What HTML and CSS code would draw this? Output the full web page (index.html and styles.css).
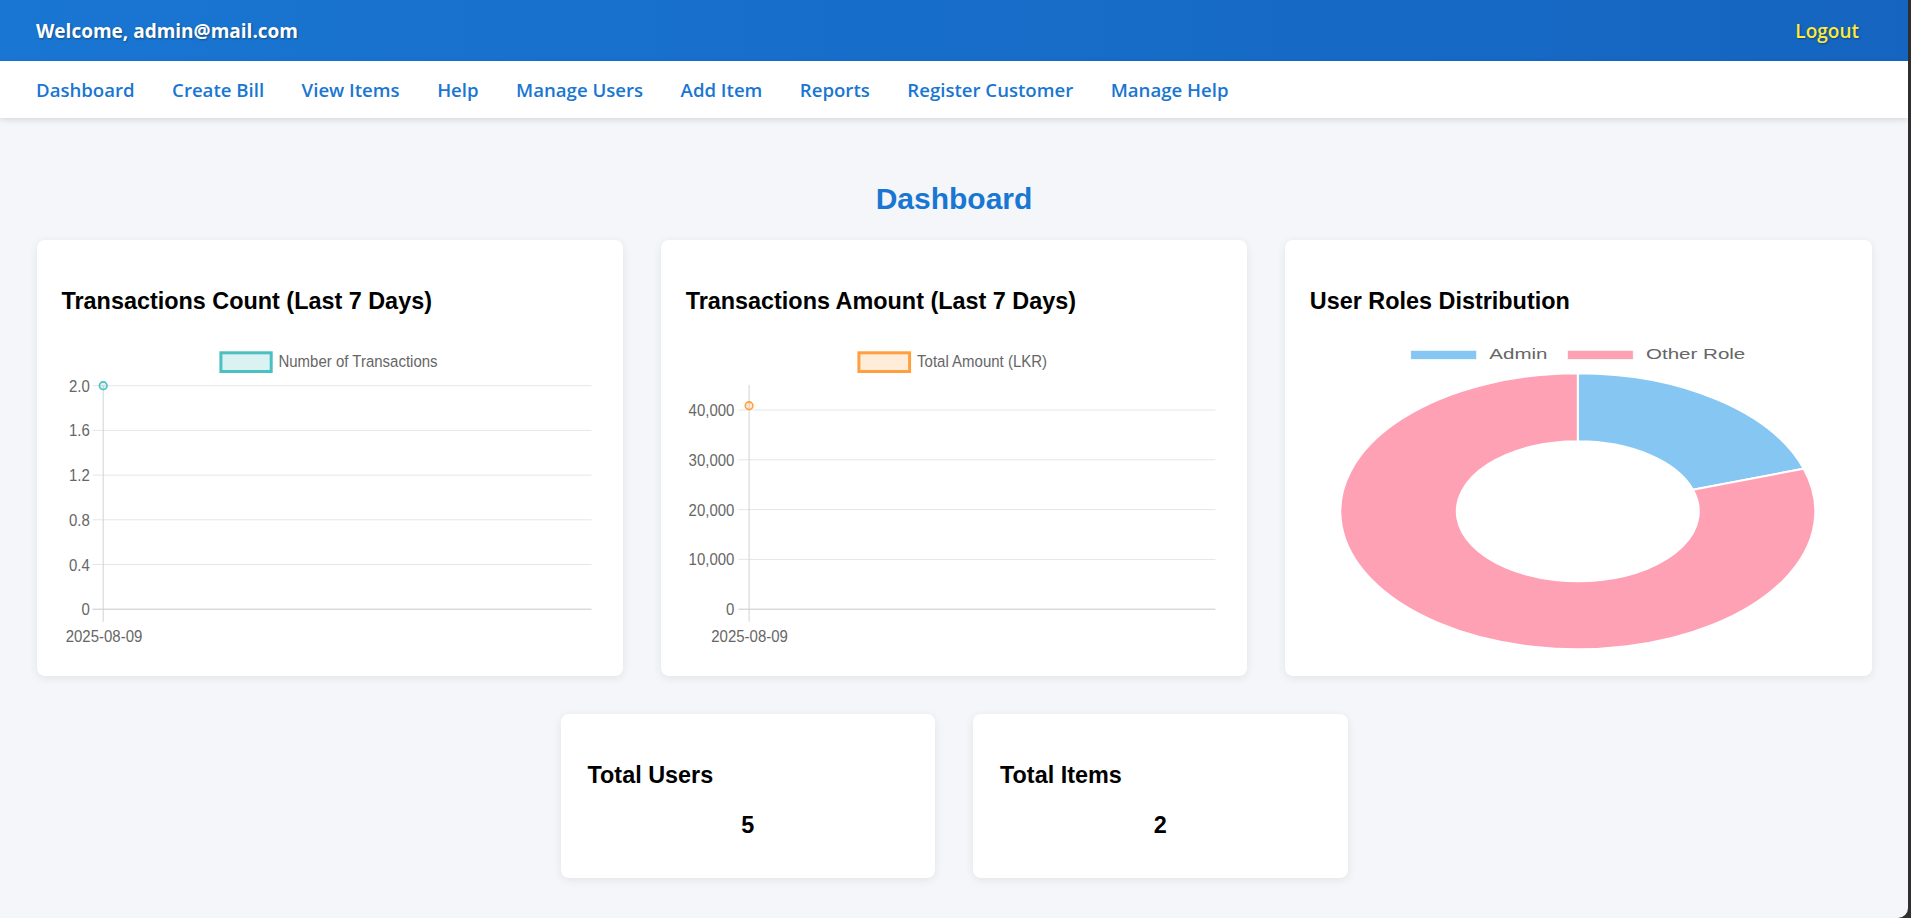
FILE: index.html
```html
<!DOCTYPE html>
<html lang="en">
<head>
<meta charset="utf-8">
<title>Dashboard</title>
<link rel="stylesheet" href="styles.css">
</head>
<body>
<div class="window">
  <header class="topbar">
    <span class="welcome">Welcome, admin@mail.com</span>
    <a class="logout" href="#">Logout</a>
  </header>
  <nav class="menu">
    <a href="#">Dashboard</a>
    <a href="#">Create Bill</a>
    <a href="#">View Items</a>
    <a href="#">Help</a>
    <a href="#">Manage Users</a>
    <a href="#">Add Item</a>
    <a href="#">Reports</a>
    <a href="#">Register Customer</a>
    <a href="#">Manage Help</a>
  </nav>
  <main class="content">
    <h2 class="page-title">Dashboard</h2>
    <section class="charts">
      <div class="card chart-card">
        <h3 class="card-title">Transactions Count (Last 7 Days)</h3>
        <svg class="chart" width="535" height="312" viewBox="0 0 535 312">
          <rect x="158.9" y="13.8" width="50.3" height="18.7" fill="rgba(75,192,192,0.2)" stroke="#4bc0c0" stroke-width="3"/>
          <text class="ct" transform="translate(216.4 28.3) scale(1 1.15)">Number of Transactions</text>
          <g stroke="#e6e6e6" stroke-width="1">
            <line x1="30.5" y1="46.7" x2="529.5" y2="46.7"/>
            <line x1="30.5" y1="91.4" x2="529.5" y2="91.4"/>
            <line x1="30.5" y1="136.1" x2="529.5" y2="136.1"/>
            <line x1="30.5" y1="180.8" x2="529.5" y2="180.8"/>
            <line x1="30.5" y1="225.5" x2="529.5" y2="225.5"/>
          </g>
          <line x1="30.5" y1="270.2" x2="529.5" y2="270.2" stroke="#c9c9c9"/>
          <line x1="41.2" y1="46.7" x2="41.2" y2="282.7" stroke="#d2d2d2"/>
          <g class="ct" text-anchor="end">
            <text transform="translate(27.8 52.7) scale(1 1.15)">2.0</text>
            <text transform="translate(27.8 97.4) scale(1 1.15)">1.6</text>
            <text transform="translate(27.8 142.1) scale(1 1.15)">1.2</text>
            <text transform="translate(27.8 186.8) scale(1 1.15)">0.8</text>
            <text transform="translate(27.8 231.5) scale(1 1.15)">0.4</text>
            <text transform="translate(27.8 276.2) scale(1 1.15)">0</text>
          </g>
          <text class="ct" text-anchor="middle" transform="translate(42 303) scale(1 1.15)">2025-08-09</text>
          <circle cx="41.2" cy="46.7" r="3.8" fill="rgba(75,192,192,0.2)" stroke="#4bc0c0" stroke-width="1.6"/>
        </svg>
      </div>
      <div class="card chart-card">
        <h3 class="card-title">Transactions Amount (Last 7 Days)</h3>
        <svg class="chart" width="535" height="312" viewBox="0 0 535 312">
          <rect x="172.9" y="13.8" width="50.7" height="18.7" fill="rgba(255,159,64,0.2)" stroke="#ff9f40" stroke-width="3"/>
          <text class="ct" transform="translate(231.1 28.3) scale(1 1.15)">Total Amount (LKR)</text>
          <g stroke="#e6e6e6" stroke-width="1">
            <line x1="52.4" y1="71" x2="529.4" y2="71"/>
            <line x1="52.4" y1="120.8" x2="529.4" y2="120.8"/>
            <line x1="52.4" y1="170.6" x2="529.4" y2="170.6"/>
            <line x1="52.4" y1="220.4" x2="529.4" y2="220.4"/>
          </g>
          <line x1="52.4" y1="270.2" x2="529.4" y2="270.2" stroke="#c9c9c9"/>
          <line x1="63.1" y1="46" x2="63.1" y2="282.7" stroke="#d2d2d2"/>
          <g class="ct" text-anchor="end">
            <text transform="translate(48.4 77) scale(1 1.15)">40,000</text>
            <text transform="translate(48.4 126.8) scale(1 1.15)">30,000</text>
            <text transform="translate(48.4 176.6) scale(1 1.15)">20,000</text>
            <text transform="translate(48.4 226.4) scale(1 1.15)">10,000</text>
            <text transform="translate(48.4 276.2) scale(1 1.15)">0</text>
          </g>
          <text class="ct" text-anchor="middle" transform="translate(63.6 303) scale(1 1.15)">2025-08-09</text>
          <circle cx="63.1" cy="66.7" r="3.8" fill="rgba(255,159,64,0.2)" stroke="#ff9f40" stroke-width="1.6"/>
        </svg>
      </div>
      <div class="card chart-card">
        <h3 class="card-title">User Roles Distribution</h3>
        <svg class="chart" width="535" height="312" viewBox="0 0 535 312">
          <rect x="100.8" y="11.4" width="65.7" height="9" fill="#86c6f2" stroke="#fff" stroke-width="0.6"/>
          <text class="ct" transform="translate(179.3 20.3) scale(1.37 0.93)">Admin</text>
          <rect x="257.5" y="11.4" width="65.7" height="9" fill="#ffa1b5" stroke="#fff" stroke-width="0.6"/>
          <text class="ct" transform="translate(336 20.3) scale(1.37 0.93)">Other Role</text>
          <path d="M267.8,34.3 A237.5,138 0 0 1 493.7,129.7 L382.9,150.7 A121,70 0 0 0 267.8,102.3 Z" fill="#86c6f2" stroke="#fff" stroke-width="2"/>
          <path d="M493.7,129.7 A237.5,138 0 1 1 267.8,34.3 L267.8,102.3 A121,70 0 1 0 382.9,150.7 Z" fill="#ffa1b5" stroke="#fff" stroke-width="2"/>
        </svg>
      </div>
    </section>
    <section class="stats">
      <div class="card stat-card">
        <h3 class="card-title">Total Users</h3>
        <p class="stat-value">5</p>
      </div>
      <div class="card stat-card">
        <h3 class="card-title">Total Items</h3>
        <p class="stat-value">2</p>
      </div>
    </section>
  </main>
</div>
</body>
</html>
```

FILE: styles.css
```css
html {
  background: #2f2f2f;
}
body {
  margin: 0;
  font-family: "Liberation Sans", Arial, sans-serif;
}
.window {
  width: calc(100% - 3px);
  min-height: 100vh;
  background: #f4f6f9;
  border-bottom-right-radius: 10px;
  overflow: hidden;
}
.topbar {
  height: 61px;
  box-sizing: border-box;
  padding: 0 37px 0 36px;
  display: flex;
  align-items: center;
  justify-content: space-between;
  background: linear-gradient(90deg, #1976d2, #1565c0);
}
.welcome {
  font-family: "Open Sans", "Noto Sans", sans-serif;
  font-weight: 700;
  font-size: 19px;
  color: #fff;
  text-shadow: 1px 1px 2px rgba(0, 0, 0, 0.35);
}
.logout {
  font-family: "Open Sans", "Noto Sans", sans-serif;
  font-weight: 600;
  font-size: 19px;
  color: #ffeb3b;
  text-decoration: none;
  padding: 6px 12px;
  text-shadow: 1px 1px 2px rgba(0, 0, 0, 0.35);
}
.menu {
  height: 57px;
  box-sizing: border-box;
  padding-left: 36px;
  display: flex;
  align-items: center;
  gap: 37.5px;
  background: #fff;
  box-shadow: 0 2px 6px rgba(0, 0, 0, 0.12);
  position: relative;
}
.menu a {
  font-family: "Open Sans", "Noto Sans", sans-serif;
  font-weight: 600;
  font-size: 18.6px;
  color: #1976d2;
  text-decoration: none;
}
.content {
  padding: 0 36.5px 40px;
}
.page-title {
  margin: 64px 0 24px;
  text-align: center;
  font-size: 30px;
  font-weight: 700;
  color: #1976d2;
}
.charts {
  display: grid;
  grid-template-columns: repeat(3, 1fr);
  gap: 37.5px;
}
.card {
  background: #fff;
  border-radius: 8px;
  box-shadow: 0 2px 10px rgba(0, 0, 0, 0.08);
  box-sizing: border-box;
}
.chart-card {
  height: 436px;
  padding: 25px 25px;
}
.card-title {
  margin: 23px 0 24px;
  font-size: 23.4px;
  font-weight: 700;
  color: #000;
}
.chart {
  display: block;
}
.ct {
  font-family: "Liberation Sans", Arial, sans-serif;
  font-size: 15px;
  fill: #666;
}
.stats {
  margin-top: 38px;
  display: flex;
  justify-content: center;
  gap: 38px;
}
.stat-card {
  width: 374.5px;
  height: 164px;
  padding: 25px 27px;
}
.stat-card .card-title {
  margin-bottom: 23px;
}
.stat-value {
  margin: 0;
  text-align: center;
  font-size: 23.4px;
  font-weight: 700;
  color: #000;
}
```
